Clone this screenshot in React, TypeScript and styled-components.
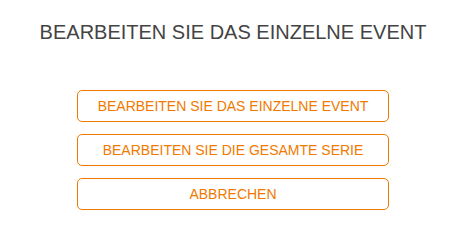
import React from "react";
import styled, { createGlobalStyle } from "styled-components";

const Global = createGlobalStyle`
  html, body { margin: 0; padding: 0; background: #fff; }
  body { font-family: "Liberation Sans", Arial, sans-serif; }
`;

const Dialog = styled.div`
  width: 466px;
  height: 231px;
  box-sizing: border-box;
  padding-top: 20px;
  display: flex;
  flex-direction: column;
  align-items: center;
`;

const Title = styled.h1`
  margin: 0;
  font-size: 20px;
  font-weight: normal;
  line-height: 24px;
  color: #444;
  text-align: center;
`;

const Actions = styled.div`
  margin-top: 46px;
  display: flex;
  flex-direction: column;
  gap: 12px;
`;

const Button = styled.button`
  width: 312px;
  height: 32px;
  box-sizing: border-box;
  border: 1px solid #f07a00;
  border-radius: 5px;
  background: #fff;
  color: #f07a00;
  font-family: "Liberation Sans", Arial, sans-serif;
  font-size: 14px;
  padding: 0;
  cursor: pointer;
`;

export default function App() {
  return (
    <>
      <Global />
      <Dialog>
        <Title>BEARBEITEN SIE DAS EINZELNE EVENT</Title>
        <Actions>
          <Button>BEARBEITEN SIE DAS EINZELNE EVENT</Button>
          <Button>BEARBEITEN SIE DIE GESAMTE SERIE</Button>
          <Button>ABBRECHEN</Button>
        </Actions>
      </Dialog>
    </>
  );
}
